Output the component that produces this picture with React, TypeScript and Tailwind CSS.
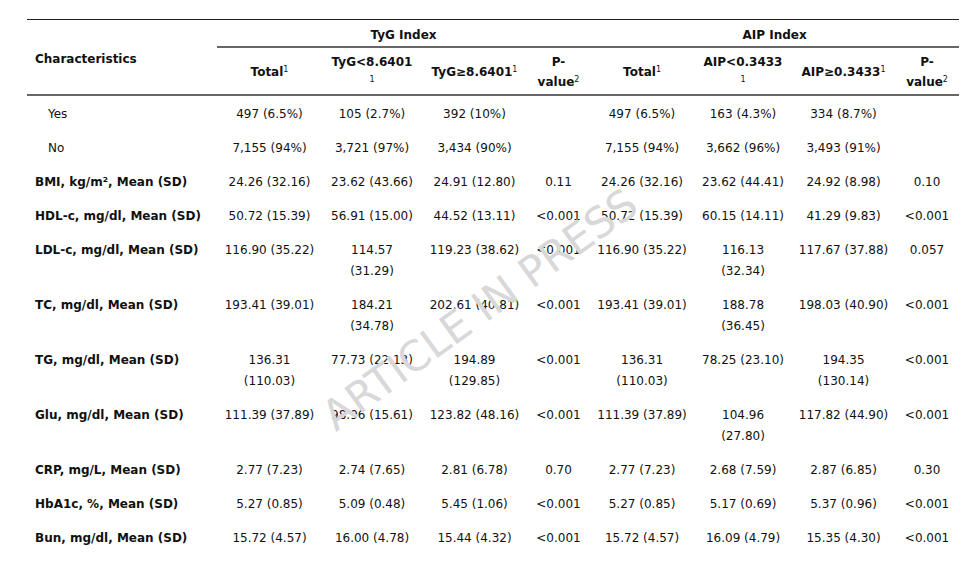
import React from "react";

type Row = {
  label: string;
  sub?: boolean;
  cells: React.ReactNode[];
};

const two = (a: string, b: string) => (
  <>
    {a}
    <br />
    {b}
  </>
);

const rows: Row[] = [
  { label: "Yes", sub: true, cells: ["497 (6.5%)", "105 (2.7%)", "392 (10%)", "", "497 (6.5%)", "163 (4.3%)", "334 (8.7%)", ""] },
  { label: "No", sub: true, cells: ["7,155 (94%)", "3,721 (97%)", "3,434 (90%)", "", "7,155 (94%)", "3,662 (96%)", "3,493 (91%)", ""] },
  { label: "BMI, kg/m², Mean (SD)", cells: ["24.26 (32.16)", "23.62 (43.66)", "24.91 (12.80)", "0.11", "24.26 (32.16)", "23.62 (44.41)", "24.92 (8.98)", "0.10"] },
  { label: "HDL-c, mg/dl, Mean (SD)", cells: ["50.72 (15.39)", "56.91 (15.00)", "44.52 (13.11)", "<0.001", "50.72 (15.39)", "60.15 (14.11)", "41.29 (9.83)", "<0.001"] },
  { label: "LDL-c, mg/dl, Mean (SD)", cells: ["116.90 (35.22)", two("114.57", "(31.29)"), "119.23 (38.62)", "<0.001", "116.90 (35.22)", two("116.13", "(32.34)"), "117.67 (37.88)", "0.057"] },
  { label: "TC, mg/dl, Mean (SD)", cells: ["193.41 (39.01)", two("184.21", "(34.78)"), "202.61 (40.81)", "<0.001", "193.41 (39.01)", two("188.78", "(36.45)"), "198.03 (40.90)", "<0.001"] },
  { label: "TG, mg/dl, Mean (SD)", cells: [two("136.31", "(110.03)"), "77.73 (22.13)", two("194.89", "(129.85)"), "<0.001", two("136.31", "(110.03)"), "78.25 (23.10)", two("194.35", "(130.14)"), "<0.001"] },
  { label: "Glu, mg/dl, Mean (SD)", cells: ["111.39 (37.89)", "98.96 (15.61)", "123.82 (48.16)", "<0.001", "111.39 (37.89)", two("104.96", "(27.80)"), "117.82 (44.90)", "<0.001"] },
  { label: "CRP, mg/L, Mean (SD)", cells: ["2.77 (7.23)", "2.74 (7.65)", "2.81 (6.78)", "0.70", "2.77 (7.23)", "2.68 (7.59)", "2.87 (6.85)", "0.30"] },
  { label: "HbA1c, %, Mean (SD)", cells: ["5.27 (0.85)", "5.09 (0.48)", "5.45 (1.06)", "<0.001", "5.27 (0.85)", "5.17 (0.69)", "5.37 (0.96)", "<0.001"] },
  { label: "Bun, mg/dl, Mean (SD)", cells: ["15.72 (4.57)", "16.00 (4.78)", "15.44 (4.32)", "<0.001", "15.72 (4.57)", "16.09 (4.79)", "15.35 (4.30)", "<0.001"] },
];

// small superscript marker, sits near cap height like the source table
const Sup = ({ n }: { n: string }) => (
  <span className="relative -top-[4px] text-[8px] font-normal leading-none">{n}</span>
);

export default function App() {
  return (
    <div className="relative w-[980px] h-[586px] bg-white overflow-hidden font-['DejaVu_Sans',sans-serif] text-[12px] text-[#111]">
      <div className="pt-[19px] pl-[27px]">
        <table className="table-fixed border-collapse w-[932px]">
          <colgroup>
            <col className="w-[190px]" />
            <col className="w-[105px]" />
            <col className="w-[100px]" />
            <col className="w-[105px]" />
            <col className="w-[63px]" />
            <col className="w-[104px]" />
            <col className="w-[98px]" />
            <col className="w-[103px]" />
            <col className="w-[64px]" />
          </colgroup>
          <thead className="font-bold">
            {/* group headers */}
            <tr className="h-[27px] border-t border-[#222]">
              <th rowSpan={2} className="text-left align-middle pl-2 pt-1 font-bold border-b-2 border-[#666]">
                Characteristics
              </th>
              <th colSpan={4} className="text-center align-middle border-b-2 border-[#666] pt-[4px]">
                TyG Index
              </th>
              <th colSpan={4} className="text-center align-middle border-b-2 border-[#666] pt-[4px]">
                AIP Index
              </th>
            </tr>
            <tr className="h-[48px] border-b-2 border-[#666] leading-[20px]">
              <th className="text-center align-middle pt-[2px]">
                Total<Sup n="1" />
              </th>
              <th className="text-center align-middle pt-[2px]">
                TyG&lt;8.6401
                <br />
                <Sup n="1" />
              </th>
              <th className="text-center align-middle whitespace-nowrap pt-[2px]">
                TyG≥8.6401<Sup n="1" />
              </th>
              <th className="text-center align-middle pt-[2px]">
                P-
                <br />
                value<Sup n="2" />
              </th>
              <th className="text-center align-middle pt-[2px]">
                Total<Sup n="1" />
              </th>
              <th className="text-center align-middle pt-[2px]">
                AIP&lt;0.3433
                <br />
                <Sup n="1" />
              </th>
              <th className="text-center align-middle whitespace-nowrap pt-[2px]">
                AIP≥0.3433<Sup n="1" />
              </th>
              <th className="text-center align-middle pt-[2px]">
                P-
                <br />
                value<Sup n="2" />
              </th>
            </tr>
          </thead>
          <tbody className="leading-[21px]">
            {rows.map((r) => (
              <tr key={r.label}>
                <td
                  className={
                    r.sub
                      ? "align-top pt-[8px] pb-[5px] pl-[21px] whitespace-nowrap"
                      : "align-top pt-[8px] pb-[5px] pl-2 font-bold whitespace-nowrap"
                  }
                >
                  {r.label}
                </td>
                {r.cells.map((c, i) => (
                  <td key={i} className="align-top text-center pt-[8px] pb-[5px] px-0.5 whitespace-nowrap">
                    {c}
                  </td>
                ))}
              </tr>
            ))}
          </tbody>
        </table>
      </div>

      {/* watermark */}
      <div className="pointer-events-none absolute left-[480px] top-[310px] -translate-x-1/2 -translate-y-1/2 rotate-[-36deg] whitespace-nowrap text-[42px] leading-none text-[#d8d8d8]">
        ARTICLE IN PRESS
      </div>
    </div>
  );
}
